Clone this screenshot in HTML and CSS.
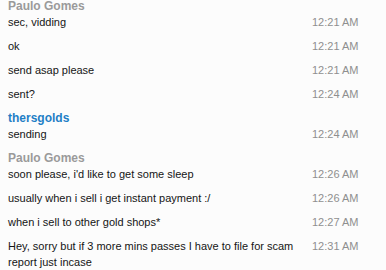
FILE: index.html
```html
<!DOCTYPE html>
<html>
<head>
<meta charset="utf-8">
<link rel="stylesheet" href="styles.css">
</head>
<body>
<div class="chat">
  <div class="name">Paulo Gomes</div>
  <div class="msg"><span class="text">sec, vidding</span><span class="time">12:21 AM</span></div>
  <div class="msg"><span class="text">ok</span><span class="time">12:21 AM</span></div>
  <div class="msg"><span class="text">send asap please</span><span class="time">12:21 AM</span></div>
  <div class="msg"><span class="text">sent?</span><span class="time">12:24 AM</span></div>
  <div class="name me">thersgolds</div>
  <div class="msg"><span class="text">sending</span><span class="time">12:24 AM</span></div>
  <div class="name">Paulo Gomes</div>
  <div class="msg"><span class="text">soon please, i'd like to get some sleep</span><span class="time">12:26 AM</span></div>
  <div class="msg"><span class="text">usually when i sell i get instant payment :/</span><span class="time">12:26 AM</span></div>
  <div class="msg"><span class="text">when i sell to other gold shops*</span><span class="time">12:27 AM</span></div>
  <div class="msg"><span class="text">Hey, sorry but if 3 more mins passes I have to file for scam report just incase</span><span class="time">12:31 AM</span></div>
</div>
</body>
</html>
```
FILE: styles.css
```css
html, body {
  margin: 0;
  padding: 0;
  background: #fcfcfc;
  overflow: hidden;
}
body {
  width: 386px;
  height: 270px;
  font-family: "Liberation Sans", Arial, sans-serif;
  font-size: 11px;
  color: #151515;
}
.chat {
  display: flex;
  flex-direction: column;
  padding: 0 8px;
  margin-top: -2px;
}
.name {
  line-height: 16px;
  font-size: 12px;
  font-weight: bold;
  color: #9a9a9a;
}
.name.me {
  color: #1f7fc6;
}
.msg {
  display: flex;
  gap: 8px;
  line-height: 16px;
  padding-bottom: 8px;
}
.text {
  flex: 1;
}
.time {
  width: 66px;
  flex: none;
  color: #8f8f8f;
}
```
